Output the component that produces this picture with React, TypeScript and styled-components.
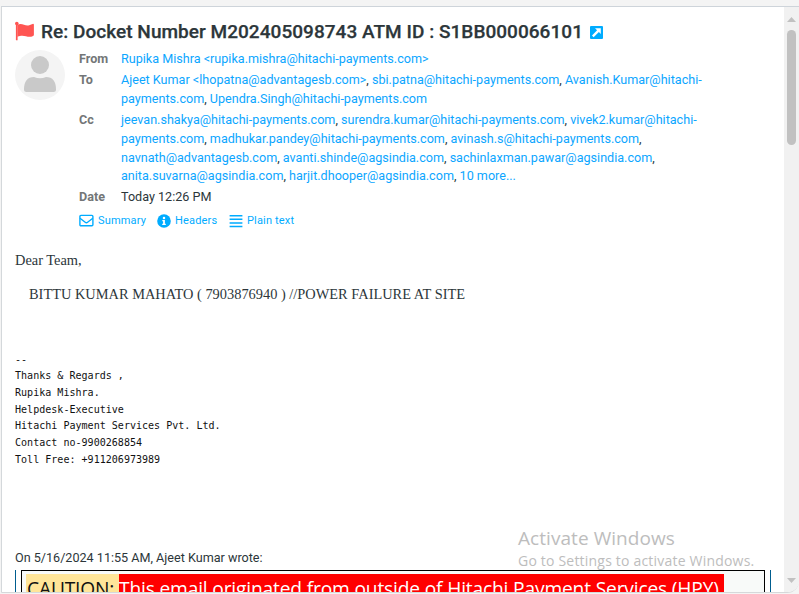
import React from "react";
import styled, { createGlobalStyle } from "styled-components";

const GlobalStyle = createGlobalStyle`
  * { box-sizing: border-box; }
  html, body { margin: 0; height: 594px; overflow: hidden; background: #f4f4f4; }
`;

const Page = styled.div`
  width: 799px;
  height: 594px;
  padding: 6px 0 1px 1px;
  background: #f4f4f4;
  font-family: Roboto, sans-serif;
  color: #2c363a;
  overflow: hidden;
  position: relative;
`;

const Panel = styled.div`
  display: flex;
  height: 587px;
  border: 1px solid #ced4da;
  border-right: 0;
  border-left-color: #d4d8db;
  border-bottom-color: #d6d8da;
  border-bottom-right-radius: 12px;
  background: #fff;
  overflow: hidden;
`;

const Message = styled.main`
  width: 782px;
  height: 585px;
  padding: 11px 12px 0 13px;
  flex: none;
  overflow: hidden;
`;

const Subject = styled.h1`
  display: flex;
  align-items: center;
  height: 26px;
  margin: 0;
  font-size: 19px;
  font-weight: 500;
  letter-spacing: 0.04px;
  white-space: nowrap;
  svg { flex: none; }
`;

const SubjectText = styled.span`
  margin: 0 8px 0 7px;
  width: 541px;
  -webkit-text-stroke: 0.25px #2c363a;
`;

const ExternalLink = styled.span`
  display: flex;
  padding-top: 2px;
`;

const Header = styled.section`
  display: flex;
  margin-top: 6px;
`;

const Avatar = styled.div`
  width: 50px;
  height: 50px;
  margin: 0 14px 0 0;
  flex: none;
  border-radius: 50%;
  background: #f4f4f4;
  overflow: hidden;
`;

const Fields = styled.dl`
  display: grid;
  grid-template-columns: 42px auto;
  row-gap: 2.2px;
  margin: 0;
  font-size: 12.6px;
  line-height: 18.83px;
`;

const Label = styled.dt`
  color: #737677;
  font-weight: 700;
`;

const Value = styled.dd`
  margin: 0;
  white-space: nowrap;
`;

const Address = styled.span`
  color: #0ca6ff;
`;

const Links = styled.nav`
  display: flex;
  align-items: center;
  height: 16px;
  margin-top: 5.5px;
  font-size: 11px;
  letter-spacing: 0.16px;
  color: #00acff;
`;

const HeaderLink = styled.a<{ $width: number }>`
  display: flex;
  align-items: center;
  gap: 4px;
  width: ${(p) => p.$width}px;
  white-space: nowrap;
  svg { flex: none; }
`;

const Letter = styled.div`
  margin-top: 23px;
  font: 14.4px/17px "Liberation Serif", serif;
  white-space: pre;
`;

const Paragraph = styled.p<{ $indent?: number }>`
  margin: 0 0 17px ${(p) => p.$indent ?? 0}px;
`;

const Signature = styled.pre`
  margin: 49px 0 0;
  font: 10.06px/16.67px "DejaVu Sans Mono", monospace;
  color: #111;
`;

const Attribution = styled.p`
  margin: 79.5px 0 0;
  font-size: 12.6px;
  line-height: 19px;
`;

const Quote = styled.blockquote`
  height: 40px;
  margin: 3px 0 0;
  width: 756px;
  padding: 0 5px;
  border: solid #005d8f;
  border-width: 0 1px;
`;

const CautionBox = styled.div`
  display: flex;
  height: 40px;
  padding: 3px 4px;
  border: 1px solid #000;
  background: #f8faf9;
  font: 19.2px/29px "Open Sans", sans-serif;
  letter-spacing: -0.17px;
  white-space: nowrap;
`;

const CautionLabel = styled.span`
  width: 93px;
  flex: none;
  padding-left: 1px;
  background: #ffe599;
  color: #111;
`;

const CautionText = styled.span`
  width: 605px;
  flex: none;
  background: #f00;
  color: #fff;
`;

const Scrollbar = styled.aside`
  display: flex;
  flex-direction: column;
  align-items: center;
  width: 15px;
  height: 585px;
  padding: 10px 0 9px;
  margin-left: auto;
  background: #f1f1f1;
`;

const Thumb = styled.div`
  width: 9px;
  height: 115px;
  margin: 8px 0 auto;
  border-radius: 5px;
  background: #c1c1c1;
`;

const Watermark = styled.div`
  position: absolute;
  left: 518px;
  top: 525px;
  color: #bdbdbd;
  font-family: "Open Sans", sans-serif;
  white-space: nowrap;
`;

const WatermarkTitle = styled.div`
  font-size: 19px;
  line-height: 26px;
  letter-spacing: 0.06px;
`;

const WatermarkText = styled.div`
  font-size: 14px;
  line-height: 20px;
  letter-spacing: 0.2px;
`;

const recipients = {
  to: [
    ["Ajeet Kumar <lhopatna@advantagesb.com>, ", "sbi.patna@hitachi-payments.com, ", "Avanish.Kumar@hitachi-"],
    ["payments.com, ", "Upendra.Singh@hitachi-payments.com"],
  ],
  cc: [
    ["jeevan.shakya@hitachi-payments.com, ", "surendra.kumar@hitachi-payments.com, ", "vivek2.kumar@hitachi-"],
    ["payments.com, ", "madhukar.pandey@hitachi-payments.com, ", "avinash.s@hitachi-payments.com,"],
    ["navnath@advantagesb.com, ", "avanti.shinde@agsindia.com, ", "sachinlaxman.pawar@agsindia.com,"],
    ["anita.suvarna@agsindia.com, ", "harjit.dhooper@agsindia.com, ", "10 more..."],
  ],
};

function Recipients({ lines }: { lines: string[][] }) {
  return (
    <Value>
      {lines.map((line, i) => (
        <div key={i}>
          {line.map((item) => {
            const name = item.replace(/, ?$/, "");
            return (
              <React.Fragment key={item}>
                <Address>{name}</Address>
                {item.slice(name.length)}
              </React.Fragment>
            );
          })}
        </div>
      ))}
    </Value>
  );
}

const FlagIcon = () => (
  <svg width="19" height="20" viewBox="0 0 19 20" fill="#ff5552">
    <circle cx="1.8" cy="2.6" r="1.8" />
    <path d="M.9 2h1.7v17.2H.9z" />
    <path d="M2.4 3.8C7 1.2 10 5.6 14.2 4.2L17.6 2.9Q18.9 2.6 18.9 3.8V13.7Q18.9 14.5 18.1 14.9C12.8 17.8 9.5 12.8 2.4 15.8z" />
  </svg>
);

const ExternalIcon = () => (
  <svg width="13" height="13" viewBox="0 0 13 13">
    <rect width="13" height="13" rx="1" fill="#00acff" />
    <path d="M5 2.2h5.8V8L8.9 6.1 3.6 11.2 2 9.6 7.1 4.3z" fill="#fff" />
  </svg>
);

const EnvelopeIcon = () => (
  <svg width="15" height="13" viewBox="0 0 15 13" fill="none" stroke="#00acff" strokeWidth="1.4">
    <rect x=".9" y="1.4" width="13" height="10.3" rx="1" />
    <path d="M1 4.3 6.2 8.3Q7.4 9.2 8.6 8.3L13.8 4.3" />
  </svg>
);

const InfoIcon = () => (
  <svg width="14" height="14" viewBox="0 0 14 14">
    <circle cx="7" cy="7" r="6.8" fill="#00acff" />
    <circle cx="7" cy="3.9" r="1.25" fill="#fff" />
    <path d="M5.3 6h2.6v3.7h.9v1.2H5.2V9.7h.9V7.2h-.8z" fill="#fff" />
  </svg>
);

const LinesIcon = () => (
  <svg width="14" height="14" viewBox="0 0 14 14" fill="#00acff">
    <path d="M.6 1h12.8v1.5H.6zM.6 4.6h12.8v1.5H.6zM.6 8.2h12.8v1.5H.6zM.6 11.8h12.8v1.5H.6z" />
  </svg>
);

const Arrow = ({ down }: { down?: boolean }) => (
  <svg width="9" height="5" viewBox="0 0 9 5" fill="#c1c1c1">
    <path d={down ? "M0 0h9L4.5 5z" : "M0 5h9L4.5 0z"} />
  </svg>
);

export default function App() {
  return (
    <Page>
      <GlobalStyle />
      <Panel>
        <Message>
          <Subject>
            <FlagIcon />
            <SubjectText>Re: Docket Number M202405098743 ATM ID : S1BB000066101</SubjectText>
            <ExternalLink><ExternalIcon /></ExternalLink>
          </Subject>
          <Header>
            <Avatar>
              <svg width="50" height="50" viewBox="0 0 50 50" fill="#c9c9c9">
                <circle cx="25" cy="15" r="9" />
                <path d="M9 39.5Q9 27 19 27Q25 29.5 31 27Q41 27 41 39.5Q41 42 38.5 42h-27Q9 42 9 39.5z" />
              </svg>
            </Avatar>
            <div>
              <Fields>
                <Label>From</Label>
                <Value>
                  <Address>Rupika Mishra &lt;rupika.mishra@hitachi-payments.com&gt;</Address>
                </Value>
                <Label>To</Label>
                <Recipients lines={recipients.to} />
                <Label>Cc</Label>
                <Recipients lines={recipients.cc} />
                <Label>Date</Label>
                <Value>Today 12:26 PM</Value>
              </Fields>
              <Links>
                <HeaderLink $width={78}><EnvelopeIcon />Summary</HeaderLink>
                <HeaderLink $width={72}><InfoIcon />Headers</HeaderLink>
                <HeaderLink $width={80}><LinesIcon />Plain text</HeaderLink>
              </Links>
            </div>
          </Header>
          <Letter>
            <Paragraph>Dear Team,</Paragraph>
            <Paragraph $indent={14}>BITTU KUMAR MAHATO ( 7903876940 ) //POWER FAILURE AT SITE</Paragraph>
          </Letter>
          <Signature>{`-- 
Thanks & Regards ,
Rupika Mishra.
Helpdesk-Executive
Hitachi Payment Services Pvt. Ltd.
Contact no-9900268854
Toll Free: +911206973989`}</Signature>
          <Attribution>On 5/16/2024 11:55 AM, Ajeet Kumar wrote:</Attribution>
          <Quote>
            <CautionBox>
              <CautionLabel>CAUTION:</CautionLabel>
              <CautionText>This email originated from outside of Hitachi Payment Services (HPY)</CautionText>
            </CautionBox>
          </Quote>
        </Message>
        <Scrollbar>
          <Arrow />
          <Thumb />
          <Arrow down />
        </Scrollbar>
      </Panel>
      <Watermark>
        <WatermarkTitle>Activate Windows</WatermarkTitle>
        <WatermarkText>Go to Settings to activate Windows.</WatermarkText>
      </Watermark>
    </Page>
  );
}
